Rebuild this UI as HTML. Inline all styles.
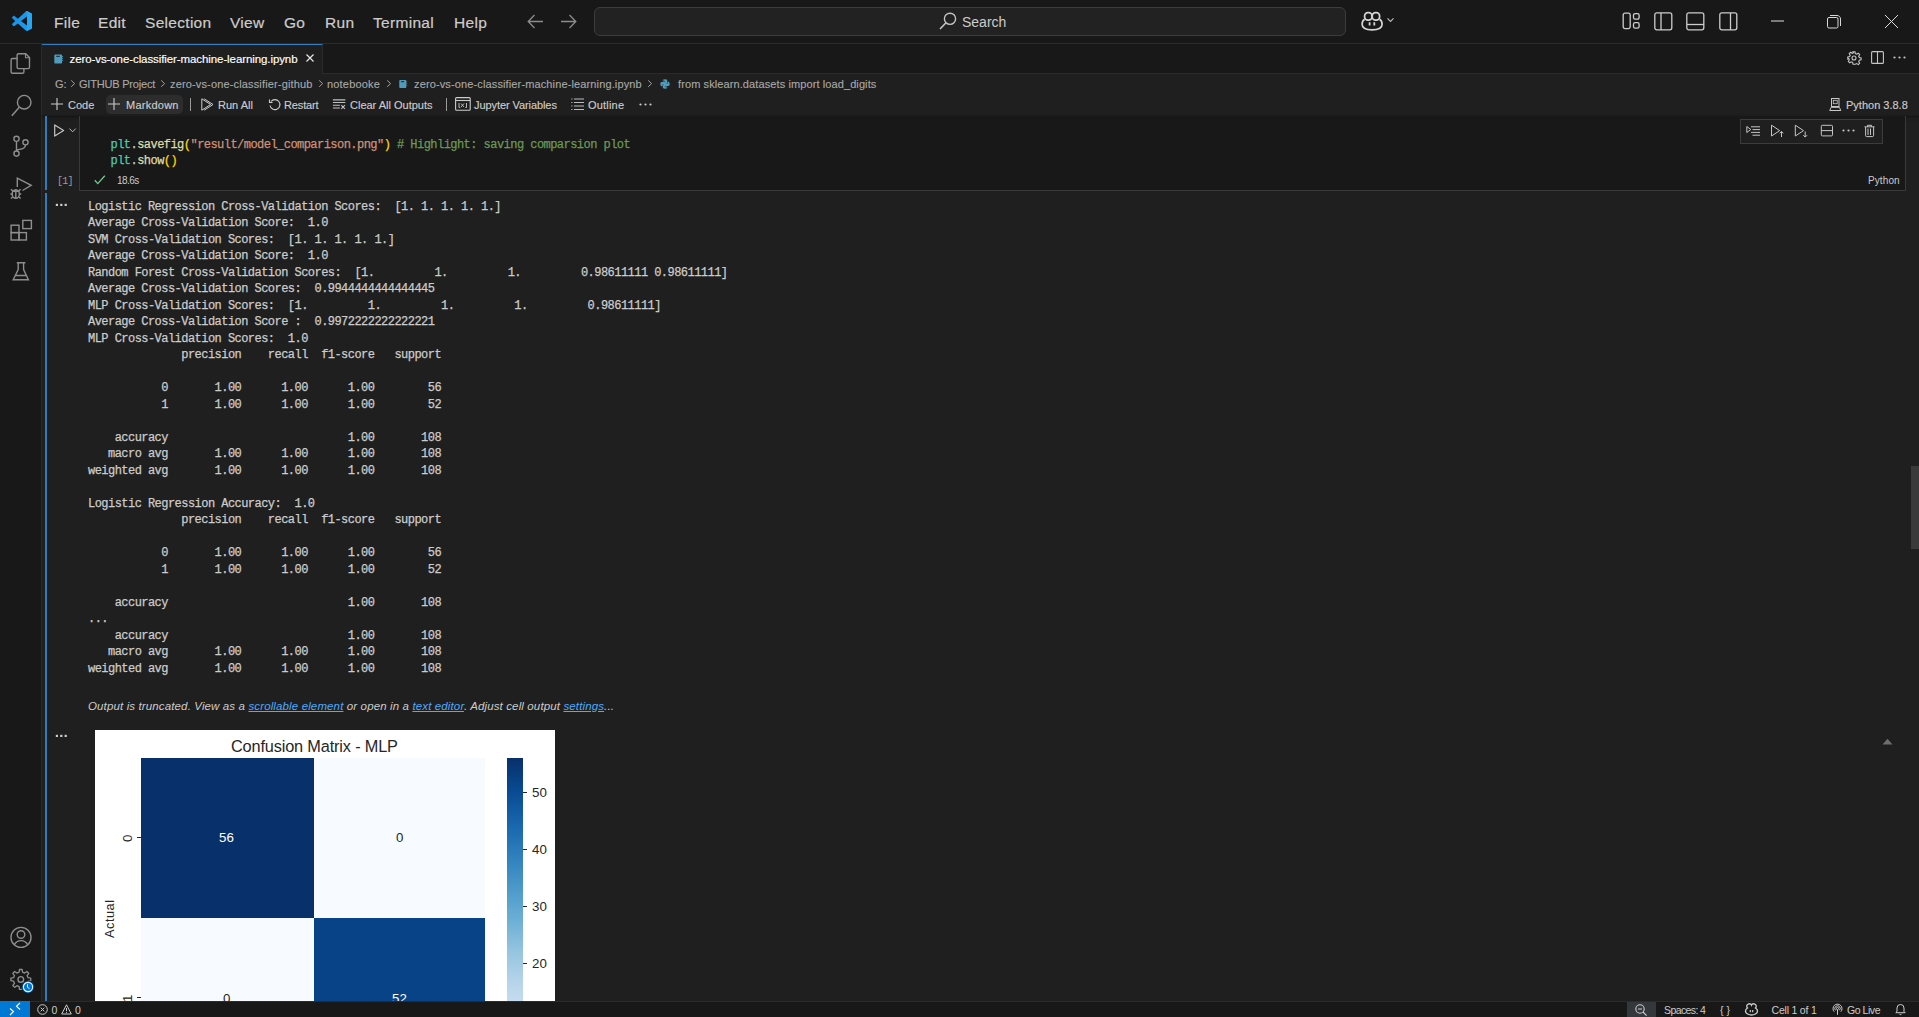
<!DOCTYPE html>
<html><head><meta charset="utf-8">
<style>
*{margin:0;padding:0;box-sizing:border-box}
html,body{width:1919px;height:1017px;overflow:hidden;background:#1f1f1f;font-family:"Liberation Sans",sans-serif;color:#cccccc}
.a{position:absolute;white-space:pre}
svg{position:absolute;overflow:visible}
#title{left:0;top:0;width:1919px;height:44px;background:#181818;border-bottom:1px solid #2b2b2b}
#act{left:0;top:44px;width:42px;height:957px;background:#181818;border-right:1px solid #2b2b2b}
#tabs{left:42px;top:44px;width:1877px;height:30px;background:#181818}
#tabline{left:323px;top:73px;width:1596px;height:1px;background:#2b2b2b}
#tab{left:42px;top:44px;width:281px;height:30px;background:#1f1f1f;border-top:1px solid #2f7fc0;border-right:1px solid #2b2b2b}
#status{left:0;top:1001px;width:1919px;height:16px;background:#181818;border-top:1px solid #2b2b2b}
.menu{top:14px;font-size:15.5px;letter-spacing:0.3px;color:#cccccc;-webkit-text-stroke:0.2px currentColor}
.mono{font-family:"Liberation Mono",monospace;font-size:12px;letter-spacing:-0.54px;line-height:16.5px;-webkit-text-stroke:0.25px currentColor}
.ui12{font-size:12px;color:#cccccc}
.bc{top:78px !important;font-size:11px;color:#a9a9a9;-webkit-text-stroke:0.12px currentColor}
.sb{top:1004px;font-size:10.5px;color:#cccccc}
.tb{top:99px;font-size:11px;color:#cccccc;-webkit-text-stroke:0.15px currentColor}
</style></head><body>
<div class="a" id="title"></div>
<div class="a" id="act"></div>
<div class="a" id="tabs"></div>
<div class="a" id="tabline"></div>
<div class="a" id="tab"></div>
<div class="a" id="status"></div>

<!-- menu -->
<svg style="left:12px;top:11px" width="20" height="20" viewBox="0 0 100 100"><defs><linearGradient id="vg" x1="0" y1="0" x2="1" y2="1"><stop offset="0" stop-color="#1a8fe0"/><stop offset="1" stop-color="#1c9ef2"/></linearGradient></defs><path d="M70.9 99.3c1.6.6 3.4.6 5-.2l20.6-9.9c2.2-1 3.5-3.2 3.5-5.6V16.4c0-2.4-1.4-4.6-3.5-5.6L75.9.9c-2.1-1-4.5-.8-6.3.6-.3.2-.5.4-.7.7L29.4 38.2 12.2 25.2c-1.6-1.2-3.8-1.1-5.3.3L1.4 30.5c-1.8 1.7-1.8 4.5 0 6.2L16.3 50 1.4 63.6c-1.8 1.7-1.8 4.5 0 6.2l5.5 5c1.5 1.4 3.7 1.5 5.3.3l17.2-13L68.9 97.8c.6.6 1.3 1.1 2 1.5zM75 27.3 45.1 50 75 72.7V27.3z" fill="url(#vg)" fill-rule="evenodd"/><path d="M75 0.5 L96.5 10.8 c2.1 1 3.5 3.2 3.5 5.6 v67.2 c0 2.4-1.3 4.6-3.5 5.6 L75 99.5z" fill="#24a8f5"/></svg>
<div id="m_file" class="a menu" style="left:54px">File</div>
<div id="m_edit" class="a menu" style="left:98px">Edit</div>
<div id="m_sel" class="a menu" style="left:145px">Selection</div>
<div id="m_view" class="a menu" style="left:230px">View</div>
<div id="m_go" class="a menu" style="left:284px">Go</div>
<div id="m_run" class="a menu" style="left:325px">Run</div>
<div id="m_term" class="a menu" style="left:373px">Terminal</div>
<div id="m_help" class="a menu" style="left:454px">Help</div>
<svg style="left:527px;top:14px" width="17" height="15" viewBox="0 0 17 15"><path d="M16 7.5H1.5M7.5 1L1.2 7.5L7.5 14" fill="none" stroke="#8b8b8b" stroke-width="1.3"/></svg>
<svg style="left:560px;top:14px" width="17" height="15" viewBox="0 0 17 15"><path d="M1 7.5H15.5M9.5 1L15.8 7.5L9.5 14" fill="none" stroke="#8b8b8b" stroke-width="1.3"/></svg>
<div class="a" style="left:594px;top:7px;width:752px;height:29px;border:1px solid #3c3c3c;border-radius:6px;background:#222222"></div>
<svg style="left:939px;top:12px" width="18" height="18" viewBox="0 0 18 18"><circle cx="11" cy="6.8" r="5.6" fill="none" stroke="#c5c5c5" stroke-width="1.4"/><path d="M7 10.8L1 17" stroke="#c5c5c5" stroke-width="1.6"/></svg>
<div id="m_search" class="a" style="left:962px;top:14px;font-size:14px;color:#cccccc">Search</div>
<svg style="left:1361px;top:11px" width="34" height="20" viewBox="0 0 34 20" fill="none" stroke="#d4d4d4"><rect x="3.600" y="1.600" width="7.400" height="7.600" rx="3.300" stroke-width="1.700"/><rect x="11.200" y="1.600" width="7.400" height="7.600" rx="3.300" stroke-width="1.700"/><path d="M3.600 8.200C2 9.200 1.100 11 1.100 13.200c0 3.800 4.600 5.600 10 5.600s10-1.800 10-5.600c0-2.200-.9-4-2.500-5" stroke-width="1.700"/><path d="M8.600 11.300v3.300M13.300 11.300v3.300" stroke-width="1.800"/><path d="M26.500 7.400l3 3 3-3" stroke="#c0c0c0" stroke-width="1.100"/></svg>
<svg style="left:1622px;top:12px" width="19" height="18" viewBox="0 0 19 18"><rect x="1.2" y="1.2" width="7" height="15.4" rx="1.8" fill="none" stroke="#cccccc" stroke-width="1.3"/><rect x="11.5" y="1.6" width="5.6" height="5.6" rx="1.6" fill="none" stroke="#cccccc" stroke-width="1.3"/><rect x="11.5" y="10.6" width="5.6" height="5.6" rx="1.6" fill="none" stroke="#cccccc" stroke-width="1.3"/></svg>
<svg style="left:1654px;top:12px" width="19" height="19" viewBox="0 0 19 19"><rect x="0.8" y="0.8" width="17" height="17" rx="2" fill="none" stroke="#cccccc" stroke-width="1.3"/><path d="M7 1v17" stroke="#cccccc" stroke-width="1.3"/></svg>
<svg style="left:1686px;top:12px" width="19" height="19" viewBox="0 0 19 19"><rect x="0.8" y="0.8" width="17" height="17" rx="2" fill="none" stroke="#cccccc" stroke-width="1.3"/><path d="M1 12.5h17" stroke="#cccccc" stroke-width="1.3"/></svg>
<svg style="left:1719px;top:12px" width="19" height="19" viewBox="0 0 19 19"><rect x="0.8" y="0.8" width="17" height="17" rx="2" fill="none" stroke="#cccccc" stroke-width="1.3"/><path d="M11.5 1v17" stroke="#cccccc" stroke-width="1.3"/></svg>
<svg style="left:1771px;top:20px" width="14" height="2" viewBox="0 0 14 2"><path d="M0 1h13" stroke="#dddddd" stroke-width="1"/></svg>
<svg style="left:1826px;top:14px" width="16" height="16" viewBox="0 0 16 16"><rect x="1.5" y="3.5" width="10.5" height="10.5" rx="1.5" fill="none" stroke="#d8d8d8" stroke-width="1"/><path d="M4 1.5h7c2 0 3.5 1.5 3.5 3.5v7" fill="none" stroke="#d8d8d8" stroke-width="1"/></svg>
<svg style="left:1884px;top:14px" width="15" height="15" viewBox="0 0 15 15"><path d="M1 1l13 13M14 1L1 14" stroke="#dddddd" stroke-width="1"/></svg>

<!-- activity -->
<svg style="left:0;top:44px" width="42" height="250" viewBox="0 44 42 250" fill="none" stroke="#8e8e8e" stroke-width="1.4">
<path d="M17.5 58.5h-5c-.8 0-1.4.6-1.4 1.4v12c0 .8.6 1.4 1.4 1.4h10c.8 0 1.4-.6 1.4-1.4v-3.2"/>
<path d="M18.5 53.8h7.2l3.8 3.8v9.6c0 .8-.6 1.4-1.4 1.4h-9.6c-.8 0-1.4-.6-1.4-1.4v-12c0-.8.6-1.4 1.4-1.4z"/>
<path d="M25.5 54v3.8h3.8" stroke-width="1.1"/>
<circle cx="24.2" cy="102.2" r="6.8"/><path d="M19.3 107.3L11.8 115.8" stroke-width="1.5"/>
<circle cx="16.5" cy="138.8" r="2.6"/><circle cx="25.5" cy="142.3" r="2.6"/><circle cx="16.5" cy="153.6" r="2.6"/>
<path d="M16.5 141.4v9.6M25.5 144.9c0 3-3 4-6 4.5-2 .3-3 .8-3 1.6"/>
<path d="M17.3 187V178.2L31.2 185.3L22.5 190.5"/>
<ellipse cx="15.8" cy="194" rx="3.6" ry="4.3"/><path d="M12.2 191.3h7.2M11 189.2l1.6 1.6M20.6 189.2l-1.6 1.6M10.4 194h1.8M19.4 194h1.8M11 198.6l1.6-1.6M20.6 198.6l-1.6-1.6M15.8 190v8"/>
<rect x="11.1" y="225.2" width="7.9" height="7.4"/><rect x="11.1" y="232.6" width="7.9" height="7.4"/><rect x="19" y="232.6" width="7.4" height="7.4"/><rect x="22.8" y="220.4" width="8.6" height="8.2"/>
<path d="M16.8 262.7h8.6M18.2 262.8v6.8L13.2 279.8h15.2L23.6 269.6v-6.8M15 275.5h11.6"/>
</svg>
<svg style="left:0;top:920px" width="42" height="80" viewBox="0 920 42 80" fill="none" stroke="#8e8e8e" stroke-width="1.4">
<circle cx="21" cy="937.4" r="10"/><circle cx="21" cy="934.5" r="3.8"/><path d="M14.3 944.8c1.4-2.8 3.8-4.2 6.7-4.2s5.3 1.4 6.7 4.2"/>
<path d="M28.00 977.67 L30.71 978.07 L30.71 980.73 L28.00 981.13 L27.11 983.27 L28.75 985.47 L26.87 987.35 L24.67 985.71 L22.53 986.60 L22.13 989.31 L19.47 989.31 L19.07 986.60 L16.93 985.71 L14.73 987.35 L12.85 985.47 L14.49 983.27 L13.60 981.13 L10.89 980.73 L10.89 978.07 L13.60 977.67 L14.49 975.53 L12.85 973.33 L14.73 971.45 L16.93 973.09 L19.07 972.20 L19.47 969.49 L22.13 969.49 L22.53 972.20 L24.67 973.09 L26.87 971.45 L28.75 973.33 L27.11 975.53z" stroke-width="1.3" stroke-linejoin="round"/>
<circle cx="20.8" cy="979.4" r="2.8"/>
</svg>
<svg style="left:21px;top:980px" width="14" height="14" viewBox="0 0 14 14"><circle cx="7" cy="7" r="6.2" fill="#0078d4" stroke="#181818" stroke-width="0.8"/><circle cx="7" cy="7" r="4.6" fill="none" stroke="#e6f2ff" stroke-width="1.1"/><path d="M6.5 4.3v3l2 1.3" fill="none" stroke="#e6f2ff" stroke-width="1"/></svg>

<!-- tab -->
<svg style="left:54px;top:54px" width="10" height="10" viewBox="0 0 10 10"><path d="M1.2 0.5h6c.5 0 .9.4.9.9v7.2c0 .5-.4.9-.9.9h-6c-.5 0-.9-.4-.9-.9V1.4c0-.5.4-.9.9-.9z" fill="#519aba"/><rect x="2.2" y="1.8" width="3.6" height="1.2" rx=".5" fill="#1f3a48"/><path d="M8.1 2.5h1M8.1 4.5h1M8.1 6.5h1" stroke="#519aba" stroke-width=".9"/></svg>
<div class="a" style="left:69.5px;top:53px;font-size:11.5px;letter-spacing:-0.09px;color:#ffffff;-webkit-text-stroke:0.15px currentColor">zero-vs-one-classifier-machine-learning.ipynb</div>
<svg style="left:306px;top:54px" width="8" height="8" viewBox="0 0 8 8"><path d="M0.5 0.5l7 7M7.5 0.5l-7 7" stroke="#e8e8e8" stroke-width="1.2"/></svg>
<!-- editor actions -->
<svg style="left:1847px;top:51px" width="14" height="14" viewBox="0 0 14 14" fill="none" stroke="#c5c5c5" stroke-width="1.1"><path d="M6 0.8h2l.4 1.8 1.3.6 1.6-1 1.4 1.4-1 1.6.6 1.3 1.8.4v2l-1.8.4-.6 1.3 1 1.6-1.4 1.4-1.6-1-1.3.6L8 13.2H6l-.4-1.8-1.3-.6-1.6 1-1.4-1.4 1-1.6-.6-1.3L.8 8V6l1.8-.4.6-1.3-1-1.6 1.4-1.4 1.6 1 1.3-.6z"/><circle cx="7" cy="7" r="2"/></svg>
<svg style="left:1871px;top:51px" width="13" height="13" viewBox="0 0 13 13" fill="none" stroke="#c5c5c5" stroke-width="1.1"><rect x="0.6" y="0.6" width="11.8" height="11.8" rx="1"/><path d="M6.5 0.6v11.8"/></svg>
<svg style="left:1893px;top:56px" width="13" height="3" viewBox="0 0 13 3" fill="#c5c5c5"><circle cx="1.5" cy="1.5" r="1.1"/><circle cx="6.5" cy="1.5" r="1.1"/><circle cx="11.5" cy="1.5" r="1.1"/></svg>
<!-- breadcrumb -->
<div class="a bc" style="left:55px;top:77px">G:</div>
<svg style="left:70px;top:80px" width="6" height="9" viewBox="0 0 6 9"><path d="M1.2 0.4l3.4 3.2L1.2 6.8" fill="none" stroke="#a0a0a0" stroke-width="1"/></svg>
<div class="a bc" style="left:79px;top:77px;letter-spacing:-0.2px">GITHUB Project</div>
<svg style="left:160px;top:80px" width="6" height="9" viewBox="0 0 6 9"><path d="M1.2 0.4l3.4 3.2L1.2 6.8" fill="none" stroke="#a0a0a0" stroke-width="1"/></svg>
<div class="a bc" style="left:170px;top:77px;letter-spacing:0.15px">zero-vs-one-classifier-github</div>
<svg style="left:318px;top:80px" width="6" height="9" viewBox="0 0 6 9"><path d="M1.2 0.4l3.4 3.2L1.2 6.8" fill="none" stroke="#a0a0a0" stroke-width="1"/></svg>
<div class="a bc" style="left:327px;top:77px;letter-spacing:0.19px">notebooke</div>
<svg style="left:386px;top:80px" width="6" height="9" viewBox="0 0 6 9"><path d="M1.2 0.4l3.4 3.2L1.2 6.8" fill="none" stroke="#a0a0a0" stroke-width="1"/></svg>
<svg style="left:399px;top:79px" width="9" height="10" viewBox="0 0 10 10"><path d="M1.2 0.5h6c.5 0 .9.4.9.9v7.2c0 .5-.4.9-.9.9h-6c-.5 0-.9-.4-.9-.9V1.4c0-.5.4-.9.9-.9z" fill="#519aba"/><rect x="2.2" y="1.8" width="3.6" height="1.2" rx=".5" fill="#1f3a48"/><path d="M8.1 2.5h1M8.1 4.5h1M8.1 6.5h1" stroke="#519aba" stroke-width=".9"/></svg>
<div class="a bc" style="left:414px;top:77px;letter-spacing:0.13px">zero-vs-one-classifier-machine-learning.ipynb</div>
<svg style="left:647px;top:80px" width="6" height="9" viewBox="0 0 6 9"><path d="M1.2 0.4l3.4 3.2L1.2 6.8" fill="none" stroke="#a0a0a0" stroke-width="1"/></svg>
<svg style="left:660px;top:79px" width="10" height="10" viewBox="0 0 10 10"><path d="M5 .3c-2.3 0-2.2 1-2.2 1V2.5H5.1v.4H1.8S.3 2.7.3 5s1.3 2.3 1.3 2.3h.8V6.2s0-1.3 1.3-1.3h2.3s1.2 0 1.2-1.2V1.5S7.400 .3 5 .3zM3.8 1c.2 0 .4.2.4.4s-.2.4-.4.4-.4-.2-.4-.4.2-.4.4-.4z" fill="#519aba"/><path d="M5 9.7c2.3 0 2.2-1 2.2-1V7.5H4.9v-.4h3.3S9.700 7.300 9.700 5 8.400 2.700 8.400 2.700h-.8v1.100s0 1.300-1.300 1.300H4c0 0-1.200 0-1.200 1.200v2.200S2.600 9.700 5 9.700zM6.200 9c-.2 0-.4-.2-.4-.4s.2-.4.4-.4.4.2.4.4-.2.4-.4.4z" fill="#519aba"/></svg>
<div class="a bc" style="left:678px;top:77px;letter-spacing:0.1px">from sklearn.datasets import load_digits</div>
<!-- notebook toolbar -->
<div class="a" style="left:106px;top:95px;width:77px;height:19px;background:#2d2d2d;border-radius:5px"></div>
<svg style="left:51px;top:98px" width="12" height="12" viewBox="0 0 12 12"><path d="M6 0v12M0 6h12" stroke="#cccccc" stroke-width="1.1"/></svg>
<div id="m_code" class="a tb" style="left:68px">Code</div>
<svg style="left:108px;top:98px" width="12" height="12" viewBox="0 0 12 12"><path d="M6 0v12M0 6h12" stroke="#cccccc" stroke-width="1.1"/></svg>
<div id="m_md" class="a tb" style="left:126px;letter-spacing:0.25px">Markdown</div>
<div class="a" style="left:190px;top:98px;width:1px;height:13px;background:#9a9a9a"></div>
<svg style="left:201px;top:98px" width="13" height="13" viewBox="0 0 13 13" fill="none" stroke="#cccccc" stroke-width="1" stroke-linejoin="round"><path d="M0.8 0.8v11.4L9.600 6.500z"/><path d="M3.200 0.800L12 6.500 3.200 12.200"/></svg>
<div id="m_runall" class="a tb" style="left:218px">Run All</div>
<svg style="left:268px;top:98px" width="13" height="13" viewBox="0 0 13 13" fill="none" stroke="#cccccc" stroke-width="1.1"><path d="M3 3.5A5 5 0 1 1 2 7.5"/><path d="M1.5 1.5v3h3"/></svg>
<div id="m_restart" class="a tb" style="left:284px;letter-spacing:-0.13px">Restart</div>
<svg style="left:332px;top:99px" width="14" height="11" viewBox="0 0 14 11" fill="none" stroke="#c0c0c0" stroke-width="1.1"><path d="M0.9 0.9h12.4M0.9 3.5h12.4M0.9 6.3h7M0.9 9h7M9.3 6.2l3.600 3.600M12.900 6.200l-3.600 3.600"/></svg>
<div id="m_clear" class="a tb" style="left:350px">Clear All Outputs</div>
<div class="a" style="left:446px;top:98px;width:1px;height:13px;background:#9a9a9a"></div>
<svg style="left:455px;top:97px" width="16" height="14" viewBox="0 0 16 14" fill="none" stroke="#cccccc" stroke-width="1.1"><rect x="0.6" y="0.6" width="14.6" height="12.6" rx="1"/><path d="M0.6 3.5h14.6"/><path d="M4 6v4.5h1.2M11.5 6v4.5h-1.2M6 6.5l3 3.5M9 6.5l-3 3.5" stroke-width=".9"/></svg>
<div id="m_jv" class="a tb" style="left:474px;letter-spacing:-0.08px">Jupyter Variables</div>
<svg style="left:571px;top:98px" width="13" height="13" viewBox="0 0 13 13" fill="none" stroke="#bdbdbd" stroke-width="1.1"><path d="M0.3 1h1.2M3 1h10M0.3 4.5h1.2M3 4.5h10M0.3 8h1.2M3 8h10M0.3 11.5h1.2M3 11.5h10"/></svg>
<div id="m_outline" class="a tb" style="left:588px;letter-spacing:0.19px">Outline</div>
<svg style="left:639px;top:103px" width="13" height="3" viewBox="0 0 13 3" fill="#cccccc"><circle cx="1.5" cy="1.5" r="1.1"/><circle cx="6.5" cy="1.5" r="1.1"/><circle cx="11.5" cy="1.5" r="1.1"/></svg>
<svg style="left:1828px;top:97px" width="14" height="15" viewBox="1828 97 14 15" fill="none" stroke="#c8c8c8" stroke-width="1"><rect x="1831.5" y="98.5" width="7.5" height="8"/><rect x="1833.3" y="100.300" width="3.900" height="3.400" stroke-width=".8"/><path d="M1831.200 107.300h8.100l1.500 3.200h-11.100z"/></svg>
<div id="m_py" class="a tb" style="left:1846px">Python 3.8.8</div>

<!-- cell -->
<div class="a" style="left:42px;top:116px;width:1877px;height:1px;background:#151515;box-shadow:0 1px 3px #141414"></div>
<div class="a" style="left:45px;top:116px;width:2px;height:74px;background:#2f7bbf"></div>
<div class="a" style="left:45px;top:193px;width:2px;height:808px;background:#2f7bbf"></div>
<div class="a" style="left:79px;top:116px;width:1827px;height:75px;background:#181818;border:1px solid #3a3a3a;border-top:none"></div>
<svg style="left:54px;top:124px" width="11" height="13" viewBox="0 0 11 13"><path d="M0.7 0.9v11.2L9.6 6.5z" fill="none" stroke="#c5c5c5" stroke-width="1.2" stroke-linejoin="round"/></svg>
<svg style="left:69px;top:128px" width="8" height="5" viewBox="0 0 8 5"><path d="M0.5 0.6L3.6 3.8L6.7 0.6" fill="none" stroke="#bcbcbc" stroke-width="1"/></svg>
<div id="m_count" class="a" style="left:57px;top:176px;font-family:'Liberation Mono',monospace;font-size:10px;color:#9d9d9d;letter-spacing:-0.8px">[1]</div>
<svg style="left:94px;top:175px" width="12" height="10" viewBox="0 0 12 10"><path d="M0.8 5.2L3.8 8.6L10.8 0.8" fill="none" stroke="#73c991" stroke-width="1.3"/></svg>
<div id="m_time" class="a" style="left:117px;top:175px;font-size:10px;letter-spacing:-0.55px;color:#cccccc">18.6s</div>
<div id="m_pylabel" class="a" style="left:1868px;top:175px;font-size:10px;letter-spacing:0.1px;color:#cccccc">Python</div>
<div class="mono a" style="left:110.5px;top:136.5px;line-height:16px"><span style="color:#4ec9b0">plt</span>.<span style="color:#dcdcaa">savefig</span><span style="color:#ffd700">(</span><span style="color:#ce9178">"result/model_comparison.png"</span><span style="color:#ffd700">)</span> <span style="color:#6a9955"># Highlight: saving comparsion plot</span>
<span style="color:#4ec9b0">plt</span>.<span style="color:#dcdcaa">show</span><span style="color:#ffd700">()</span></div>
<div class="a" style="left:1740px;top:119px;width:143px;height:25px;background:#1f1f1f;border:1px solid #3c3c3c"></div>
<svg style="left:1740px;top:119px" width="143" height="25" viewBox="1740 119 143 25" fill="none" stroke="#c5c5c5" stroke-width="1">
<path d="M1746.8 126.5v6l4-3z"/><path d="M1751 126.8h9M1752.5 129.6h7.5M1751 132.4h9M1752.5 135.2h7.5"/>
<path d="M1771.5 125.2v10.8l8.2-5.4z"/><path d="M1781.5 137v-5.5M1779.6 133.3l1.9-1.9 1.9 1.9"/>
<path d="M1795.3 125.2v10.8l8.2-5.4z"/><path d="M1805.2 131.5v5.5M1803.3 135.2l1.9 1.9 1.9-1.9"/>
<rect x="1821.3" y="125.3" width="11.2" height="10.6" rx="1"/><path d="M1821.3 130.6h11.2"/>
<path d="M1864.5 126.8h10M1867.5 126.8v-1.5h4v1.5M1865.6 127v8.6c0 .6.4 1 1 1h6c.6 0 1-.4 1-1V127M1868 128.5v6.5M1870.5 128.5v6.5"/>
</svg>
<svg style="left:1842px;top:129px" width="13" height="3" viewBox="0 0 13 3" fill="#c5c5c5"><circle cx="1.5" cy="1.5" r="1.1"/><circle cx="6.5" cy="1.5" r="1.1"/><circle cx="11.5" cy="1.5" r="1.1"/></svg>
<svg style="left:55px;top:203px" width="14" height="4" viewBox="0 0 14 4" fill="#cccccc"><rect x="0.8" y="0.8" width="2.2" height="2.2"/><rect x="5.2" y="0.8" width="2.2" height="2.2"/><rect x="9.6" y="0.8" width="2.2" height="2.2"/></svg>

<!-- truncated msg + image -->
<div class="a" style="left:88px;top:699.5px;font-size:11.5px;font-style:italic;letter-spacing:0.13px;color:#cccccc">Output is truncated. View as a <span style="color:#4daafc;text-decoration:underline">scrollable element</span> or open in a <span style="color:#4daafc;text-decoration:underline">text editor</span>. Adjust cell output <span style="color:#4daafc;text-decoration:underline">settings</span>...</div>
<svg style="left:55px;top:734px" width="14" height="4" viewBox="0 0 14 4" fill="#cccccc"><rect x="0.8" y="0.8" width="2.2" height="2.2"/><rect x="5.2" y="0.8" width="2.2" height="2.2"/><rect x="9.6" y="0.8" width="2.2" height="2.2"/></svg>
<div class="a" style="left:95px;top:730px;width:460px;height:271px;background:#ffffff;overflow:hidden">
 <div class="a" style="left:136px;top:7px;font-size:16.3px;letter-spacing:-0.15px;color:#262626">Confusion Matrix - MLP</div>
 <div class="a" style="left:46px;top:28px;width:173px;height:160px;background:#08306b"></div>
 <div class="a" style="left:219px;top:28px;width:171px;height:160px;background:#f7fbff"></div>
 <div class="a" style="left:46px;top:188px;width:173px;height:161px;background:#f7fbff"></div>
 <div class="a" style="left:219px;top:188px;width:171px;height:161px;background:#084387"></div>
 <div class="a" style="left:124px;top:100px;font-size:13.3px;color:#ffffff">56</div>
 <div class="a" style="left:301px;top:100px;font-size:13.3px;color:#262626">0</div>
 <div class="a" style="left:128px;top:261px;font-size:13.3px;color:#262626">0</div>
 <div class="a" style="left:297px;top:261px;font-size:13.3px;color:#ffffff">52</div>
 <div class="a" style="left:42px;top:107px;width:4px;height:1px;background:#262626"></div>
 <div class="a" style="left:42px;top:267px;width:4px;height:1px;background:#262626"></div>
 <div class="a" style="left:25px;top:112px;font-size:13.3px;color:#262626;transform:rotate(-90deg);transform-origin:0 0">0</div>
 <div class="a" style="left:25px;top:272px;font-size:13.3px;color:#262626;transform:rotate(-90deg);transform-origin:0 0">1</div>
 <div class="a" style="left:7px;top:208px;font-size:12.8px;letter-spacing:0.5px;color:#262626;transform:rotate(-90deg);transform-origin:0 0">Actual</div>
 <div class="a" style="left:412px;top:28px;width:16px;height:321px;background:linear-gradient(#08306b 0%,#084a91 10%,#1764ab 20%,#2e7ebc 30%,#4a98c9 40%,#6aaed6 50%,#94c4df 60%,#b7d4ea 70%,#d0e1f2 80%,#e3eef9 90%,#f7fbff 100%)"></div>
 <div class="a" style="left:428px;top:62px;width:4px;height:1px;background:#262626"></div>
 <div class="a" style="left:428px;top:119px;width:4px;height:1px;background:#262626"></div>
 <div class="a" style="left:428px;top:176px;width:4px;height:1px;background:#262626"></div>
 <div class="a" style="left:428px;top:233px;width:4px;height:1px;background:#262626"></div>
 <div class="a" style="left:437px;top:55px;font-size:13.3px;color:#262626">50</div>
 <div class="a" style="left:437px;top:112px;font-size:13.3px;color:#262626">40</div>
 <div class="a" style="left:437px;top:169px;font-size:13.3px;color:#262626">30</div>
 <div class="a" style="left:437px;top:226px;font-size:13.3px;color:#262626">20</div>
</div>
<!-- scroll -->
<div class="a" style="left:1911px;top:466px;width:8px;height:83px;background:#3a3a3a"></div>
<svg style="left:1882px;top:738px" width="11" height="7" viewBox="0 0 11 7"><path d="M0.5 6.5L5.5 0.8L10.5 6.5z" fill="#6e6e6e"/></svg>
<!-- status bar -->
<div class="a" style="left:0;top:1001px;width:30px;height:16px;background:#0078d4"></div>
<svg style="left:9px;top:1002px" width="12" height="14" viewBox="0 0 12 14" fill="none" stroke="#ffffff" stroke-width="1.1"><path d="M1 6.5l3.5 3L1 13M11 1L7.5 4.300 11 7.500"/></svg>
<svg style="left:37px;top:1004px" width="11" height="11" viewBox="0 0 11 11" fill="none" stroke="#cccccc" stroke-width="1"><circle cx="5.5" cy="5.5" r="4.8"/><path d="M3.7 3.7l3.6 3.6M7.3 3.7L3.7 7.3"/></svg>
<div class="a sb" style="left:51.5px">0</div>
<svg style="left:61px;top:1004px" width="11" height="11" viewBox="0 0 11 11" fill="none" stroke="#cccccc" stroke-width="1"><path d="M5.5 0.8L10.3 10H0.7z"/><path d="M5.5 4v3.2M5.5 8.2v.9"/></svg>
<div class="a sb" style="left:75px">0</div>
<div class="a" style="left:1627px;top:1002px;width:29px;height:15px;background:#34373b"></div>
<svg style="left:1635px;top:1004px" width="13" height="12" viewBox="0 0 13 12" fill="none" stroke="#cccccc" stroke-width="1.1"><circle cx="5" cy="5" r="4.2"/><path d="M3 5h4M8 8l3.6 3.6"/></svg>
<div class="a sb" style="left:1664px;letter-spacing:-0.6px">Spaces: 4</div>
<div class="a sb" style="left:1720px">{ }</div>
<svg style="left:1744px;top:1003px" width="15" height="12" viewBox="0 0 22 18"><path d="M5 7.5C3.2 6 3.5 2.5 6 1.6c2-.7 4.300-.2 5 1.600.7-1.800 3-2.300 5-1.600 2.500.900 2.800 4.400 1 5.900 1.800 1.200 3.200 3 3 5-.400 3.200-5 5.500-9 5.500S2.400 15.700 2 12.500C1.800 10.500 3.200 8.700 5 7.500z" fill="none" stroke="#cccccc" stroke-width="2"/><path d="M9.200 10.500v3.400M12.800 10.500v3.400" stroke="#cccccc" stroke-width="1.800"/></svg>
<div class="a sb" style="left:1771.5px;letter-spacing:-0.2px">Cell 1 of 1</div>
<svg style="left:1832px;top:1004px" width="11" height="11" viewBox="0 0 11 11" fill="none" stroke="#cccccc" stroke-width="1"><circle cx="5.5" cy="4.5" r="1.1"/><path d="M3.500 6.300a2.700 2.700 0 1 1 4 0M2.200 7.700a4.500 4.500 0 1 1 6.600 0M5.500 5.800v5"/></svg>
<div class="a sb" style="left:1847px;letter-spacing:-0.45px">Go Live</div>
<svg style="left:1895px;top:1003px" width="11" height="12" viewBox="0 0 11 12" fill="none" stroke="#cccccc" stroke-width="1"><path d="M2 8.5V5a3.5 3.5 0 0 1 7 0v3.5l1.2 1.2H0.8z"/><path d="M4.3 10.8a1.3 1.3 0 0 0 2.4 0"/></svg>

<!-- output text -->
<div class="a mono" style="left:88px;top:198.9px">Logistic Regression Cross-Validation Scores:  [1. 1. 1. 1. 1.]
Average Cross-Validation Score:  1.0
SVM Cross-Validation Scores:  [1. 1. 1. 1. 1.]
Average Cross-Validation Score:  1.0
Random Forest Cross-Validation Scores:  [1.         1.         1.         0.98611111 0.98611111]
Average Cross-Validation Scores:  0.9944444444444445
MLP Cross-Validation Scores:  [1.         1.         1.         1.         0.98611111]
Average Cross-Validation Score :  0.9972222222222221
MLP Cross-Validation Scores:  1.0
              precision    recall  f1-score   support

           0       1.00      1.00      1.00        56
           1       1.00      1.00      1.00        52

    accuracy                           1.00       108
   macro avg       1.00      1.00      1.00       108
weighted avg       1.00      1.00      1.00       108

Logistic Regression Accuracy:  1.0
              precision    recall  f1-score   support

           0       1.00      1.00      1.00        56
           1       1.00      1.00      1.00        52

    accuracy                           1.00       108
...
    accuracy                           1.00       108
   macro avg       1.00      1.00      1.00       108
weighted avg       1.00      1.00      1.00       108</div>
</body></html>
